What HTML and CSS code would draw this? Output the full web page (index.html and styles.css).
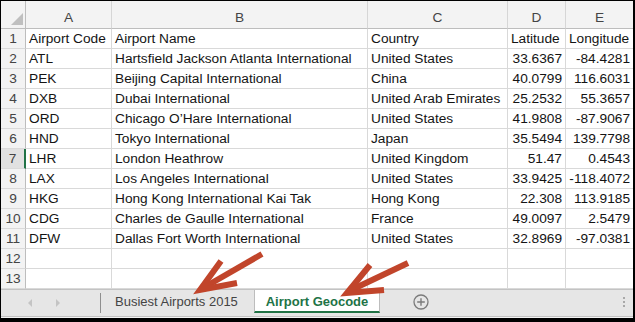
FILE: index.html
```html
<!DOCTYPE html>
<html>
<head>
<meta charset="utf-8">
<link rel="stylesheet" href="styles.css">
</head>
<body>
<div class="sheet">
  <div class="grid">
    <div class="corner"><span class="tri"></span></div>
    <div class="ch">A</div><div class="ch">B</div><div class="ch">C</div><div class="ch">D</div><div class="ch last">E</div>

    <div class="rh">1</div><div class="c">Airport Code</div><div class="c">Airport Name</div><div class="c">Country</div><div class="c">Latitude</div><div class="c last">Longitude</div>
    <div class="rh">2</div><div class="c">ATL</div><div class="c">Hartsfield Jackson Atlanta International</div><div class="c">United States</div><div class="c n">33.6367</div><div class="c n last">-84.4281</div>
    <div class="rh">3</div><div class="c">PEK</div><div class="c">Beijing Capital International</div><div class="c">China</div><div class="c n">40.0799</div><div class="c n last">116.6031</div>
    <div class="rh">4</div><div class="c">DXB</div><div class="c">Dubai International</div><div class="c">United Arab Emirates</div><div class="c n">25.2532</div><div class="c n last">55.3657</div>
    <div class="rh">5</div><div class="c">ORD</div><div class="c">Chicago O’Hare International</div><div class="c">United States</div><div class="c n">41.9808</div><div class="c n last">-87.9067</div>
    <div class="rh">6</div><div class="c">HND</div><div class="c">Tokyo International</div><div class="c">Japan</div><div class="c n">35.5494</div><div class="c n last">139.7798</div>
    <div class="rh sel">7</div><div class="c">LHR</div><div class="c">London Heathrow</div><div class="c">United Kingdom</div><div class="c n">51.47</div><div class="c n last">0.4543</div>
    <div class="rh">8</div><div class="c">LAX</div><div class="c">Los Angeles International</div><div class="c">United States</div><div class="c n">33.9425</div><div class="c n last">-118.4072</div>
    <div class="rh">9</div><div class="c">HKG</div><div class="c">Hong Kong International Kai Tak</div><div class="c">Hong Kong</div><div class="c n">22.308</div><div class="c n last">113.9185</div>
    <div class="rh">10</div><div class="c">CDG</div><div class="c">Charles de Gaulle International</div><div class="c">France</div><div class="c n">49.0097</div><div class="c n last">2.5479</div>
    <div class="rh">11</div><div class="c">DFW</div><div class="c">Dallas Fort Worth International</div><div class="c">United States</div><div class="c n">32.8969</div><div class="c n last">-97.0381</div>
    <div class="rh">12</div><div class="c"></div><div class="c"></div><div class="c"></div><div class="c"></div><div class="c last"></div>
    <div class="rh">13</div><div class="c"></div><div class="c"></div><div class="c"></div><div class="c"></div><div class="c last"></div>
  </div>

  <div class="tabbar">
    <div class="nav">
      <span class="arr-left"></span>
      <span class="arr-right"></span>
    </div>
    <div class="sep"></div>
    <div class="tab">Busiest Airports 2015</div>
    <div class="tab active">Airport Geocode</div>
    <div class="add">
      <svg width="16" height="16" viewBox="0 0 16 16">
        <circle cx="8" cy="8" r="7" fill="none" stroke="#7b7b7b" stroke-width="1.3"/>
        <path d="M8 4.2V11.8M4.2 8H11.8" stroke="#7b7b7b" stroke-width="1.4"/>
      </svg>
    </div>
    <div class="dots"><i></i><i></i><i></i></div>
  </div>
  <div class="under"></div>
</div>

<svg class="arrows" width="635" height="322" viewBox="0 0 635 322">
  <g fill="none" stroke="#c1452b" stroke-width="6" stroke-linejoin="miter" stroke-miterlimit="10">
    <line x1="262" y1="254" x2="203" y2="288"/>
    <polyline points="221,261 200,290 237,283"/>
    <line x1="408" y1="263" x2="349" y2="291"/>
    <polyline points="370,265 347,293 384,290"/>
  </g>
</svg>
</body>
</html>
```

FILE: styles.css
```css
html, body {
  margin: 0;
  padding: 0;
  background: #ffffff;
}

body {
  position: relative;
  width: 635px;
  height: 322px;
  overflow: hidden;
  font-family: "Liberation Sans", Arial, sans-serif;
}

.sheet {
  width: 632px;
  height: 317px;
  border-left: 1px solid #000;
  border-top: 1px solid #000;
  border-right: 2px solid #000;
  border-bottom: 4px solid #000;
  display: flex;
  flex-direction: column;
  background: #fff;
}

.grid {
  display: grid;
  grid-template-columns: 25px 86px 256px 140px 58px 67px;
  grid-template-rows: 28px repeat(13, 20px);
}

.grid > div {
  box-sizing: border-box;
  border-right: 1px solid #d9d9d9;
  border-bottom: 1px solid #d9d9d9;
  font-size: 13.7px;
  line-height: 16px;
  white-space: nowrap;
  overflow: hidden;
  display: flex;
  align-items: flex-end;
}

.grid > div.last {
  border-right: none;
}

.corner {
  background: #f3f3f3;
  justify-content: flex-end;
  padding: 0 2px 3px 0;
  border-bottom-color: #bdbdbd !important;
  border-right-color: #bdbdbd !important;
}

.tri {
  width: 0;
  height: 0;
  border-left: 12px solid transparent;
  border-bottom: 12px solid #bfbfbf;
}

.ch {
  background: #f3f3f3;
  color: #444;
  justify-content: center;
  padding-bottom: 2px;
  border-bottom-color: #bdbdbd !important;
  border-right-color: #d6d6d6 !important;
}

.rh {
  background: #f3f3f3;
  color: #444;
  justify-content: center;
  padding-bottom: 1px;
  border-right-color: #bdbdbd !important;
  border-bottom-color: #dadada !important;
}

.rh.sel {
  background: #e1e1e1;
  border-right: 2px solid #217346 !important;
}

.c {
  color: #141414;
  padding: 0 3px 1px 3px;
}

.c.n {
  justify-content: flex-end;
  padding-right: 3px;
}

.tabbar {
  height: 28px;
  box-sizing: border-box;
  background: #e6e6e6;
  border-top: 1px solid #c3c3c3;
  border-bottom: 1px solid #c3c3c3;
  display: flex;
  align-items: flex-start;
  font-size: 13px;
  line-height: 16px;
}

.under {
  height: 1px;
  background: #f4f4f4;
}

.nav {
  width: 99px;
  height: 100%;
  display: flex;
  align-items: center;
  box-sizing: border-box;
  padding-left: 27px;
  gap: 24px;
}

.arr-left {
  width: 0;
  height: 0;
  border-top: 4px solid transparent;
  border-bottom: 4px solid transparent;
  border-right: 4px solid #c4c4c4;
}

.arr-right {
  width: 0;
  height: 0;
  border-top: 4px solid transparent;
  border-bottom: 4px solid transparent;
  border-left: 4px solid #c4c4c4;
}

.sep {
  width: 1px;
  height: 20px;
  margin-top: 3px;
  background: #8f8f8f;
}

.tab {
  box-sizing: border-box;
  height: 23px;
  color: #444;
  padding-top: 4px;
}

.tab:not(.active) {
  width: 153px;
  padding-left: 14px;
}

.tab.active {
  width: 126px;
  background: #fff;
  color: #217346;
  font-weight: bold;
  text-align: center;
  border-left: 1px solid #bdbdbd;
  border-right: 1px solid #bdbdbd;
  border-bottom: 2px solid #217346;
}

.add {
  margin-left: 33px;
  margin-top: 4px;
  width: 16px;
  height: 16px;
}

.add svg {
  display: block;
}

.dots {
  margin-left: auto;
  margin-right: 8px;
  margin-top: 7px;
  display: flex;
  flex-direction: column;
  gap: 2px;
}

.dots i {
  display: block;
  width: 2px;
  height: 2px;
  background: #a8a8a8;
}

.arrows {
  position: absolute;
  left: 0;
  top: 0;
  pointer-events: none;
}
```
